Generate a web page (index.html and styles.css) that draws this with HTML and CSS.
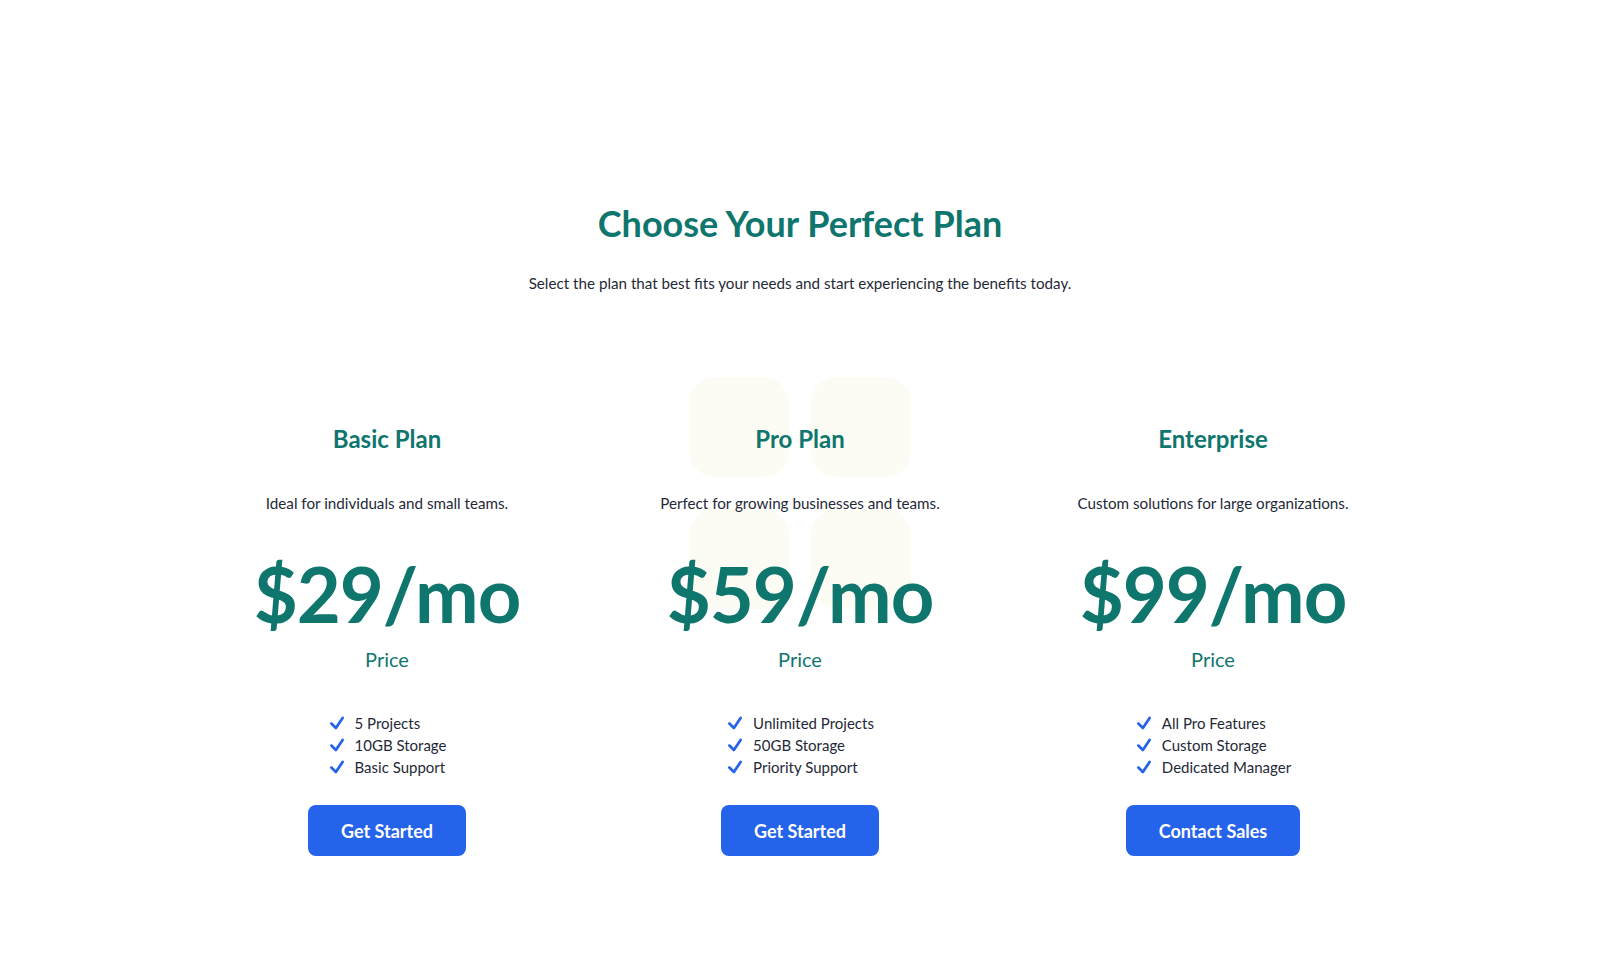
FILE: index.html
```html
<!DOCTYPE html>
<html lang="en">
<head>
<meta charset="utf-8">
<title>Pricing</title>
<link rel="stylesheet" href="styles.css">
</head>
<body>
<main class="pricing">
  <header class="intro">
    <h1 class="intro-title">Choose Your Perfect Plan</h1>
    <p class="intro-text">Select the plan that best fits your needs and start experiencing the benefits today.</p>
  </header>
  <section class="plans">
    <article class="plan">
      <h2 class="plan-name">Basic Plan</h2>
      <p class="plan-desc">Ideal for individuals and small teams.</p>
      <div class="plan-price">$29/mo</div>
      <div class="plan-price-label">Price</div>
      <ul class="features">
        <li class="feature"><svg class="check" viewBox="0 0 24 24"><path d="M4.5 12.75l6 6 9-13.5"/></svg>5 Projects</li>
        <li class="feature"><svg class="check" viewBox="0 0 24 24"><path d="M4.5 12.75l6 6 9-13.5"/></svg>10GB Storage</li>
        <li class="feature"><svg class="check" viewBox="0 0 24 24"><path d="M4.5 12.75l6 6 9-13.5"/></svg>Basic Support</li>
      </ul>
      <button class="btn">Get Started</button>
    </article>
    <article class="plan plan-featured">
      <div class="deco" aria-hidden="true"><span></span><span></span><span></span><span></span></div>
      <h2 class="plan-name">Pro Plan</h2>
      <p class="plan-desc">Perfect for growing businesses and teams.</p>
      <div class="plan-price">$59/mo</div>
      <div class="plan-price-label">Price</div>
      <ul class="features">
        <li class="feature"><svg class="check" viewBox="0 0 24 24"><path d="M4.5 12.75l6 6 9-13.5"/></svg>Unlimited Projects</li>
        <li class="feature"><svg class="check" viewBox="0 0 24 24"><path d="M4.5 12.75l6 6 9-13.5"/></svg>50GB Storage</li>
        <li class="feature"><svg class="check" viewBox="0 0 24 24"><path d="M4.5 12.75l6 6 9-13.5"/></svg>Priority Support</li>
      </ul>
      <button class="btn">Get Started</button>
    </article>
    <article class="plan">
      <h2 class="plan-name">Enterprise</h2>
      <p class="plan-desc">Custom solutions for large organizations.</p>
      <div class="plan-price">$99/mo</div>
      <div class="plan-price-label">Price</div>
      <ul class="features">
        <li class="feature"><svg class="check" viewBox="0 0 24 24"><path d="M4.5 12.75l6 6 9-13.5"/></svg>All Pro Features</li>
        <li class="feature"><svg class="check" viewBox="0 0 24 24"><path d="M4.5 12.75l6 6 9-13.5"/></svg>Custom Storage</li>
        <li class="feature"><svg class="check" viewBox="0 0 24 24"><path d="M4.5 12.75l6 6 9-13.5"/></svg>Dedicated Manager</li>
      </ul>
      <button class="btn">Contact Sales</button>
    </article>
  </section>
</main>
</body>
</html>
```

FILE: styles.css
```css
* { box-sizing: border-box; }

html, body {
  margin: 0;
  padding: 0;
  background: #ffffff;
}

body {
  font-family: "Lato", "Inter", "Liberation Sans", sans-serif;
  color: #1f2937;
}

.pricing {
  padding-top: 203px;
  display: flex;
  flex-direction: column;
  align-items: center;
}

.intro {
  text-align: center;
}

.intro-title {
  margin: 0;
  font-size: 36px;
  line-height: 40px;
  font-weight: 700;
  color: #0f766e;
}

.intro-text {
  margin: 28px 0 0;
  font-size: 15.2px;
  line-height: 24px;
  color: #1f2937;
}

.plans {
  margin-top: 128px;
  width: 1215px;
  display: grid;
  grid-template-columns: repeat(3, 1fr);
  column-gap: 24px;
}

.plan {
  position: relative;
  display: flex;
  flex-direction: column;
  align-items: center;
  text-align: center;
}

.plan > *:not(.deco) {
  position: relative;
  z-index: 1;
}

.deco {
  position: absolute;
  top: -46px;
  left: 50%;
  transform: translateX(-50%);
  display: grid;
  grid-template-columns: 100px 100px;
  grid-auto-rows: 100px;
  column-gap: 22px;
  row-gap: 32px;
  z-index: 0;
}

.deco span {
  background: #fcfcf4;
  border-radius: 26px;
}

.plan-name {
  margin: 0;
  font-size: 24px;
  line-height: 32px;
  font-weight: 700;
  color: #0f766e;
}

.plan-desc {
  margin: 36px 0 0;
  font-size: 15.2px;
  line-height: 24px;
  color: #1f2937;
}

.plan-price {
  margin-top: 41px;
  font-size: 76px;
  line-height: 76px;
  font-weight: 700;
  color: #0f766e;
  letter-spacing: -1px;
}

.plan-price-label {
  margin-top: 13px;
  font-size: 20px;
  line-height: 28px;
  color: #0f766e;
}

.features {
  list-style: none;
  margin: 39px 0 0;
  padding: 0;
  display: flex;
  flex-direction: column;
  align-items: flex-start;
}

.feature {
  display: flex;
  align-items: center;
  gap: 9px;
  font-size: 15px;
  line-height: 22px;
  color: #1f2937;
}

.check {
  width: 18px;
  height: 18px;
  fill: none;
  stroke: #2563eb;
  stroke-width: 3.6;
  stroke-linecap: round;
  stroke-linejoin: round;
  flex: none;
}

.btn {
  margin-top: 27px;
  height: 51px;
  padding: 0 33px;
  border: none;
  border-radius: 8px;
  background: #2563eb;
  color: #ffffff;
  font-family: inherit;
  font-size: 18px;
  font-weight: 700;
  cursor: pointer;
}
```
